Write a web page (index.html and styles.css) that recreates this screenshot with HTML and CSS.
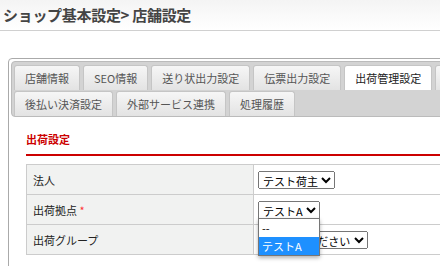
FILE: index.html
```html
<!DOCTYPE html>
<html lang="ja">
<head>
    <meta charset="UTF-8">
    <title>店舗設定</title>
    <link rel="stylesheet" href="styles.css">
</head>
<body>
    <div class="header">
        <h1>ショップ基本設定&gt; 店舗設定</h1>
    </div>
    <div class="panel">
        <div class="tabs">
            <ul class="tab-row">
                <li>店舗情報</li>
                <li>SEO情報</li>
                <li>送り状出力設定</li>
                <li>伝票出力設定</li>
                <li class="active">出荷管理設定</li>
                <li>メール設定</li>
            </ul>
            <ul class="tab-row">
                <li>後払い決済設定</li>
                <li>外部サービス連携</li>
                <li>処理履歴</li>
            </ul>
        </div>
        <div class="content">
            <h2>出荷設定</h2>
            <table class="form">
                <tr>
                    <th>法人</th>
                    <td><select class="sel"><option>テスト荷主</option></select></td>
                </tr>
                <tr>
                    <th>出荷拠点 <span class="req">*</span></th>
                    <td class="has-pop">
                        <select class="sel"><option>テストA</option></select>
                        <!-- 開いた状態のドロップダウン -->
                        <ul class="pop">
                            <li>--</li>
                            <li class="on">テストA</li>
                        </ul>
                    </td>
                </tr>
                <tr>
                    <th>出荷グループ</th>
                    <td><select class="sel"><option>選択してください</option></select></td>
                </tr>
            </table>
        </div>
    </div>
</body>
</html>
```

FILE: styles.css
```css
* {
    margin: 0;
    padding: 0;
    box-sizing: border-box;
}

body {
    width: 640px;
    font-family: "Noto Sans CJK JP", "Noto Sans", sans-serif;
    font-size: 11px;
    color: #333;
    background: #fff;
    overflow: hidden;
}

.header {
    height: 31px;
    padding: 5px 0 0 3px;
    background: linear-gradient(#f4f4f4, #fff);
    border-bottom: 1px solid #d0d0d0;
}

.header h1 {
    font-size: 15px;
    line-height: 20px;
    font-weight: bold;
    color: #444;
    letter-spacing: -0.3px;
}

.panel {
    margin: 27px 0 0 8px;
    border: 1px solid #aaa;
    border-radius: 4px;
    padding: 2px;
    height: 300px;
}

.tabs {
    background: #d3d3d3;
    border: 1px solid #bbb;
    border-radius: 4px;
    padding: 3px 2px 0;
}

.tab-row {
    display: flex;
    gap: 3px;
    list-style: none;
}

.tab-row li {
    height: 25px;
    line-height: 24px;
    padding: 0 10px;
    font-size: 11px;
    color: #555;
    background: linear-gradient(#f6f6f6, #e3e3e3);
    border: 1px solid #c5c5c5;
    border-bottom: none;
    border-radius: 3px 3px 0 0;
    white-space: nowrap;
}

.tab-row + .tab-row {
    margin-top: 1px;
}

.tab-row li.active {
    background: #fff;
    color: #222;
}

.content {
    padding: 14px 0 0 15px;
}

.content h2 {
    font-size: 11px;
    color: #c00;
    font-weight: bold;
    line-height: 16px;
    padding-bottom: 7px;
    border-bottom: 2px solid #c00;
    margin-bottom: 8px;
}

.form {
    width: 600px;
    border-collapse: collapse;
}

.form th,
.form td {
    border: 1px solid #ccc;
    height: 30px;
    font-weight: normal;
    text-align: left;
    vertical-align: middle;
}

.form th {
    width: 227px;
    background: #f1f2f1;
    padding: 0 6px;
    color: #222;
}

.form td {
    padding: 0 4px;
}

.req {
    color: #f33;
}

.sel {
    font-family: "Noto Sans CJK JP", sans-serif;
    font-size: 11px;
    height: 18px;
    color: #000;
}

.has-pop {
    position: relative;
}

.pop {
    position: absolute;
    left: 4px;
    top: 23px;
    width: 62px;
    list-style: none;
    background: #fff;
    border: 1px solid #767676;
    box-shadow: 0 2px 4px rgba(0, 0, 0, 0.3);
    z-index: 2;
}

.pop li {
    height: 18px;
    line-height: 18px;
    padding-left: 3px;
    font-size: 11px;
    color: #000;
}

.pop li.on {
    background: #1e90ff;
    color: #fff;
}
```
